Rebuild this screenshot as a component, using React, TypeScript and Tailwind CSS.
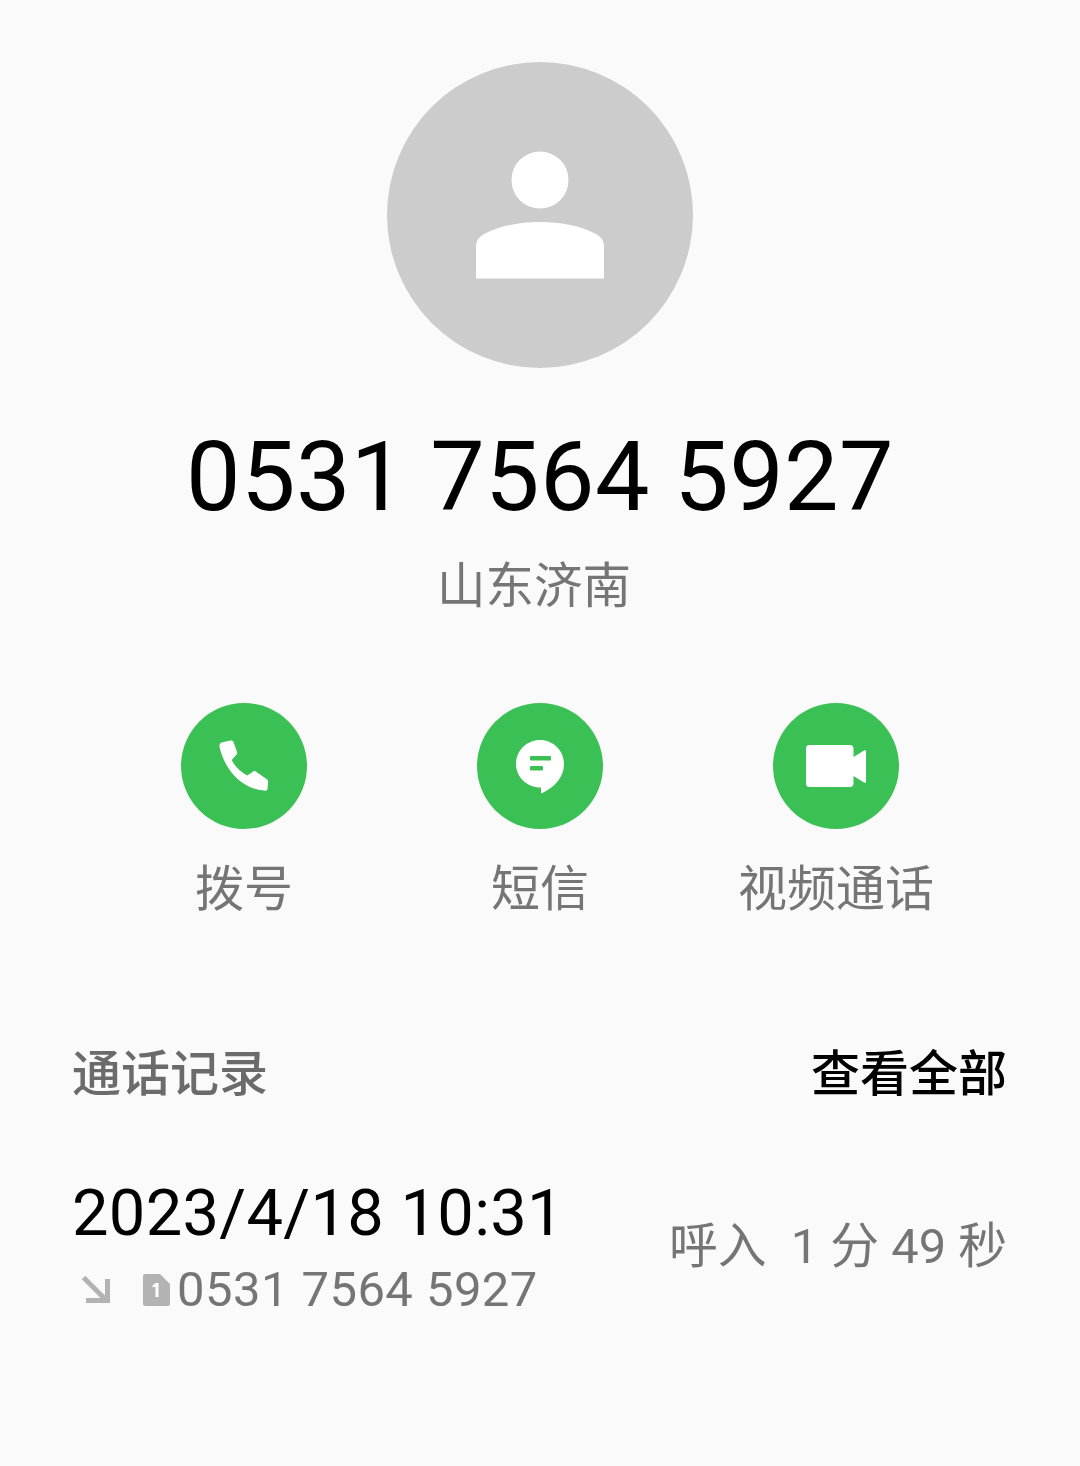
const CJK = "font-['Roboto','Noto_Sans_CJK_SC',sans-serif]";

const PhoneIcon = () => (
  <svg viewBox="0 0 126 126" className="w-[126px] h-[126px]">
    <circle cx="63" cy="63" r="63" fill="#3bc055" />
    <path
      d="M38.500 44c-.5-2.500.8-4.300 3-4.800l8-1.700c1.500-.3 2.500.3 3 1.500l3.500 10c.4 1.500 0 2.600-1.300 3.500l-4 4.500c3 6 8.500 12 15.500 15.500l6-4c1.200-.7 2.300-.5 3.300.4l10 7.200c1.200.9 1.700 1.700 1.600 3l-.6 7c-.1 1.300-1 1.800-2.300 1.600C60 86 44 67 38.500 44z"
      fill="#fff"
    />
  </svg>
);

const MessageIcon = () => (
  <svg viewBox="0 0 126 126" className="w-[126px] h-[126px]">
    <circle cx="63" cy="63" r="63" fill="#3bc055" />
    <path d="M63 37c13.300 0 24 10.700 24 24 0 12-8 21.500-18 27l-4 2.200c-.6.300-1 0-1-.6v-5.100C50 84.500 39 74 39 61 39 47.700 49.700 37 63 37z" fill="#fff" />
    <rect x="53" y="53" width="21" height="4.500" rx="1" fill="#3bc055" />
    <rect x="53" y="63" width="13" height="4.500" rx="1" fill="#3bc055" />
  </svg>
);

const VideoIcon = () => (
  <svg viewBox="0 0 126 126" className="w-[126px] h-[126px]">
    <circle cx="63" cy="63" r="63" fill="#3bc055" />
    <path
      d="M36 42h41c2.200 0 3.500 1.300 3.500 3.500v8.500l10.500-6.500c1.200-.7 2-.2 2 1.100v29.800c0 1.300-.8 1.800-2 1.100l-10.500-6.500v7.500c0 2.200-1.300 3.500-3.500 3.500H36c-2 0-3-1.300-3-3.500v-35c0-2.200 1-3.500 3-3.500z"
      fill="#fff"
    />
  </svg>
);

const actions = [
  { label: "拨号", icon: <PhoneIcon /> },
  { label: "短信", icon: <MessageIcon /> },
  { label: "视频通话", icon: <VideoIcon /> },
];

export default function App() {
  return (
    <div className={`w-[1080px] h-[1466px] overflow-hidden bg-[#fafafa] flex flex-col ${CJK}`}>
      {/* Contact header */}
      <div className="flex flex-col items-center pt-[62px]">
        <div className="w-[306px] h-[306px] rounded-full bg-[#cccccc] flex items-center justify-center">
          <svg viewBox="0 0 306 306" className="w-[306px] h-[306px]">
            <circle cx="153" cy="118" r="28.500" fill="#fff" />
            <path d="M89 216.500v-31c0-7 3-11 9-14 16-8 35-11.500 55-11.500s39 3.500 55 11.500c6 3 9 7 9 14v31z" fill="#fff" />
          </svg>
        </div>
        <div className="mt-[52px] h-[114px] leading-[114px] text-[97px] tracking-[0.4px] text-black whitespace-nowrap">0531 7564 5927</div>
        <div className="mt-[18px] h-[70px] leading-[70px] text-[48.5px] text-[#757575] -translate-x-[6px]">山东济南</div>
      </div>

      {/* Actions */}
      <div className="mt-[81px] px-[96px] grid grid-cols-3">
        {actions.map((a) => (
          <div key={a.label} className="flex flex-col items-center">
            {a.icon}
            <div className="mt-[26px] h-[70px] leading-[70px] text-[49px] text-[#757575] whitespace-nowrap">{a.label}</div>
          </div>
        ))}
      </div>

      {/* Call log */}
      <div className="mt-[115px] pl-[72px] pr-[73px] flex justify-between h-[70px] leading-[70px] text-[49px] font-medium">
        <span className="text-[#6b6b6b]">通话记录</span>
        <span className="text-black">查看全部</span>
      </div>

      <div className="mt-[65px] pl-[72px] pr-[73px] flex justify-between items-center">
        <div className="flex flex-col">
          <div className="h-[76px] leading-[76px] text-[65px] text-black whitespace-nowrap tracking-[0.3px]">2023/4/18 10:31</div>
          <div className="mt-[11px] flex items-center h-[56px]">
            <svg viewBox="0 0 28 28" className="w-[28px] h-[28px] ml-[10px]" fill="none" stroke="#b3b3b3" strokeWidth="5">
              <path d="M1.500 1.500L24 24" />
              <path d="M25.500 3v21.500H4" />
            </svg>
            <svg viewBox="0 0 27 32" className="w-[27px] h-[32px] ml-[33px]">
              <path d="M2 0h15l10 10v20c0 1.200-.8 2-2 2H2c-1.200 0-2-.8-2-2V2C0 .8.8 0 2 0z" fill="#b3b3b3" />
              <path d="M12.500 9h3v14h-3v-10.500l-2.800 1v-2.300z" fill="#fff" />
            </svg>
            <span className="ml-[7px] text-[49px] leading-[56px] text-[#757575] whitespace-nowrap tracking-[0.43px]">0531 7564 5927</span>
          </div>
        </div>
        <div className="text-[48.8px] leading-[70px] text-[#757575] whitespace-pre">呼入  1 分 49 秒</div>
      </div>
    </div>
  );
}
